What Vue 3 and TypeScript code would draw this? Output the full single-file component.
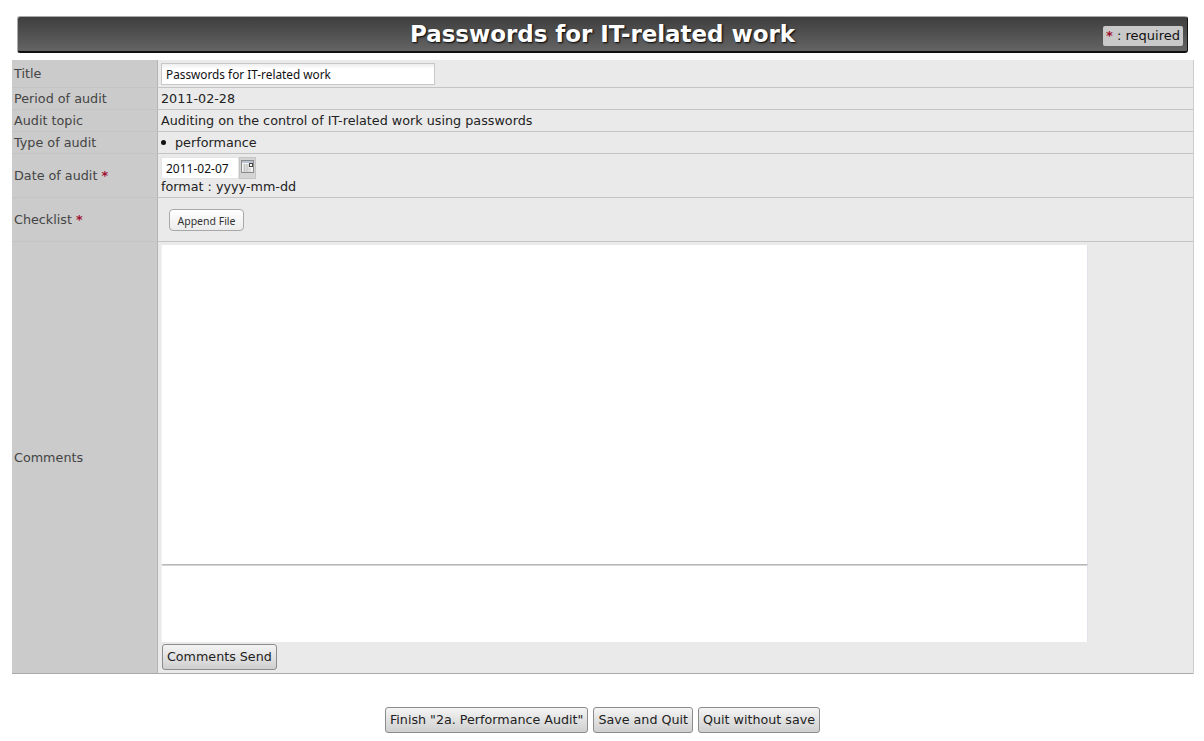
<script setup lang="ts">
const bottomButtons: string[] = ['Finish "2a. Performance Audit"', 'Save and Quit', 'Quit without save']
</script>

<template>
  <div class="page">
    <header class="titlebar">
      <h1>Passwords for IT-related work</h1>
      <span class="legend"><span class="req">*</span> : required</span>
    </header>
    <div class="form">
      <div class="row h28">
        <div class="label title-label">Title</div>
        <div class="value"><input class="title-input" value="Passwords for IT-related work" /></div>
      </div>
      <div class="row h22">
        <div class="label">Period of audit</div>
        <div class="value">2011-02-28</div>
      </div>
      <div class="row h22">
        <div class="label">Audit topic</div>
        <div class="value">Auditing on the control of IT-related work using passwords</div>
      </div>
      <div class="row h22">
        <div class="label">Type of audit</div>
        <div class="value"><span class="bullet"></span>performance</div>
      </div>
      <div class="row h44">
        <div class="label">Date of audit <span class="req">*</span></div>
        <div class="value stack">
          <div class="date">
            <input class="date-input" value="2011-02-07" />
            <span class="cal">
              <svg width="13" height="13" viewBox="0 0 13 13">
                <rect x="0.5" y="0.5" width="12" height="12" fill="#f4f4f4" stroke="#8a8a8a" />
                <rect x="1" y="1" width="11" height="2" fill="#b9c4d2" />
                <path d="M2 5h6M2 7h6M2 9h8M2 11h8M3.5 4v8M6 4v8" stroke="#c4c4c4" fill="none" />
                <rect x="8.5" y="3.5" width="3" height="3" fill="#fff" stroke="#444" />
              </svg>
            </span>
          </div>
          <div>format : yyyy-mm-dd</div>
        </div>
      </div>
      <div class="row h44">
        <div class="label">Checklist <span class="req">*</span></div>
        <div class="value"><button class="append">Append File</button></div>
      </div>
      <div class="row comments">
        <div class="label">Comments</div>
        <div class="value stack comments-cell">
          <div class="log"></div>
          <div class="entry"></div>
          <button class="btn send">Comments Send</button>
        </div>
      </div>
    </div>
    <div class="actions">
      <button v-for="b in bottomButtons" :key="b" class="btn">{{ b }}</button>
    </div>
  </div>
</template>

<style>
html, body { margin: 0; background: #fff; }
</style>

<style scoped>
.page {
  width: 1204px;
  height: 741px;
  overflow: hidden;
  box-sizing: border-box;
  padding: 16px 11px 0 12px;
  font-family: "DejaVu Sans", Verdana, sans-serif;
  font-size: 12.75px;
  color: #222;
}
.titlebar {
  position: relative;
  margin: 0 5px 0 5px;
  height: 37px;
  box-sizing: border-box;
  border: 1px solid #aaa;
  border-right-color: #111;
  border-bottom: 2px solid #111;
  border-radius: 3px;
  background: linear-gradient(#3e3e3e, #646464);
  display: flex;
  align-items: center;
  justify-content: center;
}
h1 {
  margin: 0;
  font-size: 23px;
  font-weight: bold;
  color: #fff;
  text-shadow: 1px 1px 2px #000;
  letter-spacing: -0.05px;
}
.legend {
  position: absolute;
  right: 4px;
  top: 9px;
  height: 20px;
  line-height: 20px;
  padding: 0 3px 0 3px;
  background: #c9c9c9;
  border-radius: 2px;
  color: #111;
  font-size: 13px;
}
.req { color: #a01030; font-weight: bold; }
.form {
  margin-top: 7px;
  width: 1181px;
  border-right: 1px solid #ccc;
}
.row {
  display: grid;
  grid-template-columns: 146px 1fr;
  border-bottom: 1px solid #c4c4c4;
  box-sizing: border-box;
}
.h28 { height: 28px; }
.h22 { height: 22px; }
.h44 { height: 44px; }
.comments { height: 432px; border-bottom-color: #aaa; }
.label {
  background: #cbcbcb;
  color: #444;
  padding-left: 2px;
  display: flex;
  align-items: center;
  white-space: pre;
  border-right: 1px solid #b4b4b4;
}
.value {
  background: #eaeaea;
  padding-left: 3px;
  display: flex;
  align-items: center;
  color: #222;
}
.stack { flex-direction: column; align-items: flex-start; justify-content: center; }
.title-input {
  width: 274px;
  height: 22px;
  box-sizing: border-box;
  border: 1px solid #c8c8c8;
  padding: 2px 4px;
  font: 11.8px "Noto Sans", Verdana, sans-serif;
  color: #111;
  background: linear-gradient(#eeeeee, #fff 5px);
  outline: none;
}
.bullet {
  width: 5px;
  height: 5px;
  border-radius: 50%;
  background: #111;
  margin-right: 9px;
}
.date { display: flex; height: 22px; }
.date-input {
  width: 78px;
  height: 22px;
  box-sizing: border-box;
  border: 1px solid #e4e4e4;
  padding: 2px 4px;
  font: 12px "Noto Sans", Verdana, sans-serif;
  color: #111;
  background: #fff;
  outline: none;
}
.cal {
  width: 17px;
  height: 22px;
  box-sizing: border-box;
  background: #d4d4d4;
  border: 1px solid #c4c4c4;
  padding: 2px 0 0 1px;
  display: block;
}
.cal svg { display: block; }
.append {
  margin-left: 8px;
  margin-top: 1px;
  height: 22px;
  width: 75px;
  padding: 1px 0 0;
  border: 1px solid #a8a8a8;
  border-radius: 4px;
  background: linear-gradient(#fff, #ececec);
  font: 10.5px "Noto Sans", Verdana, sans-serif;
  color: #333;
}
.comments-cell { justify-content: flex-start; padding-top: 3px; box-sizing: border-box; }
.log {
  width: 926px;
  height: 320px;
  margin-left: 1px;
  background: #fff;
  border-right: 1px solid #e2e2ea;
  border-bottom: 1px solid #b8b8b8;
  box-shadow: -1px 0 0 #f2f2f2;
  box-sizing: border-box;
}
.entry {
  width: 926px;
  height: 77px;
  margin-left: 1px;
  background: #fff;
  border-right: 1px solid #e2e2ea;
  border-top: 1px solid #d4d4d4;
  box-sizing: border-box;
  box-shadow: -1px 0 0 #f2f2f2;
}
.btn {
  height: 26px;
  box-sizing: border-box;
  padding: 0 4px 1px;
  border: 1px solid #8c8c8c;
  border-radius: 3px;
  background: linear-gradient(#f4f4f4, #cfcfcf);
  font: 12.7px "DejaVu Sans", Verdana, sans-serif;
  color: #222;
  white-space: nowrap;
}
.send { margin-top: 2px; margin-left: 1px; }
.actions {
  margin-top: 33px;
  display: flex;
  justify-content: center;
  gap: 5px;
}
</style>
